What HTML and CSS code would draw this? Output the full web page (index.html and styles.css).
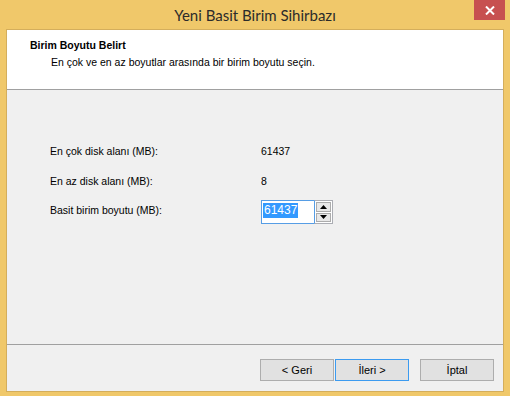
FILE: index.html
```html
<!DOCTYPE html>
<html lang="tr">
<head>
<meta charset="utf-8">
<title>Yeni Basit Birim Sihirbazı</title>
<link rel="stylesheet" href="styles.css">
</head>
<body>
<div class="window">
  <div class="titlebar">
    <div class="title">Yeni Basit Birim Sihirbazı</div>
    <div class="close">
      <svg width="10" height="9" viewBox="0 0 10 9"><path d="M1 0.5 L9 8.5 M9 0.5 L1 8.5" stroke="#fff" stroke-width="2" fill="none"/></svg>
    </div>
  </div>
  <div class="client">
    <div class="header">
      <div class="h-title">Birim Boyutu Belirt</div>
      <div class="h-sub">En çok ve en az boyutlar arasında bir birim boyutu seçin.</div>
    </div>
    <div class="body">
      <div class="grid">
        <div class="label">En çok disk alanı (MB):</div>
        <div class="value">61437</div>
        <div class="label">En az disk alanı (MB):</div>
        <div class="value">8</div>
        <div class="label">Basit birim boyutu (MB):</div>
        <div class="spin">
          <div class="spin-input"><span class="sel">61437</span></div>
          <div class="spin-btns">
            <div class="spin-btn"><svg width="7" height="4" viewBox="0 0 7 4"><path d="M3.5 0 L7 4 L0 4 Z" fill="#000"/></svg></div>
            <div class="spin-btn"><svg width="7" height="4" viewBox="0 0 7 4"><path d="M0 0 L7 0 L3.5 4 Z" fill="#000"/></svg></div>
          </div>
        </div>
      </div>
    </div>
    <div class="footer">
      <div class="btn">&lt; Geri</div>
      <div class="btn default">İleri &gt;</div>
      <div class="btn cancel">İptal</div>
    </div>
  </div>
</div>
</body>
</html>
```
FILE: styles.css
```css
html, body {
  margin: 0;
  padding: 0;
}
body {
  width: 510px;
  height: 396px;
  overflow: hidden;
  font-family: "Liberation Sans", Arial, sans-serif;
  font-size: 10.5px;
  color: #000;
}
.window {
  position: relative;
  width: 510px;
  height: 396px;
  box-sizing: border-box;
  background: #F0C86A;
  padding: 0 6px 4px 6px;
  display: flex;
  flex-direction: column;
}
.titlebar {
  height: 29px;
  display: flex;
  align-items: center;
  justify-content: center;
  flex-shrink: 0;
}
.title {
  font-family: "Lato", "Noto Sans", sans-serif;
  font-size: 15px;
  color: #2b2b2b;
}
.close {
  position: absolute;
  top: 0;
  left: 474px;
  width: 31px;
  height: 20px;
  background: #C75050;
  display: flex;
  align-items: center;
  justify-content: center;
}
.client {
  flex: 1;
  border: 1px solid #D4AE5C;
  background: #F0F0F0;
  display: flex;
  flex-direction: column;
}
.header {
  height: 60px;
  box-sizing: border-box;
  background: #FFFFFF;
  border-bottom: 1px solid #A0A0A0;
  padding: 9px 0 0 23px;
  flex-shrink: 0;
}
.h-title {
  font-weight: bold;
  line-height: 13px;
}
.h-sub {
  line-height: 13px;
  margin-top: 4px;
  padding-left: 21px;
}
.body {
  flex: 1;
  padding: 46px 0 0 43px;
}
.grid {
  display: grid;
  grid-template-columns: 211px auto;
  grid-template-rows: 30px 30px 28px;
  align-items: center;
}
.label, .value {
  line-height: 13px;
}
.spin {
  align-self: end;
  display: flex;
  width: 72px;
  height: 24px;
}
.spin-input {
  width: 53px;
  height: 24px;
  box-sizing: border-box;
  border: 1px solid #569DE5;
  border-right: none;
  background: #fff;
  padding: 2px 0 0 1px;
  font-size: 12px;
}
.sel {
  display: inline-block;
  background: #3399FF;
  color: #fff;
  line-height: 15px;
  padding: 0 1px;
}
.spin-btns {
  width: 19px;
  height: 24px;
  box-sizing: border-box;
  border: 1px solid #ABADB3;
  border-left: 1px solid #569DE5;
  background: #fff;
  padding: 1px;
  display: flex;
  flex-direction: column;
  gap: 1px;
}
.spin-btn {
  flex: 1;
  border: 1px solid #ACACAC;
  background: #E8E8E8;
  display: flex;
  align-items: center;
  justify-content: center;
}
.footer {
  flex-shrink: 0;
  height: 47px;
  box-sizing: border-box;
  border-top: 1px solid #A0A0A0;
  display: flex;
  justify-content: flex-end;
  align-items: flex-start;
  padding: 14px 9px 0 0;
}
.btn {
  width: 74px;
  height: 22px;
  box-sizing: border-box;
  border: 1px solid #ADADAD;
  background: #E1E1E1;
  display: flex;
  align-items: center;
  justify-content: center;
  line-height: 13px;
  font-size: 11px;
}
.btn.default {
  margin-left: 1px;
  border-color: #3C9BF0;
}
.btn.cancel {
  margin-left: 11px;
}
```
